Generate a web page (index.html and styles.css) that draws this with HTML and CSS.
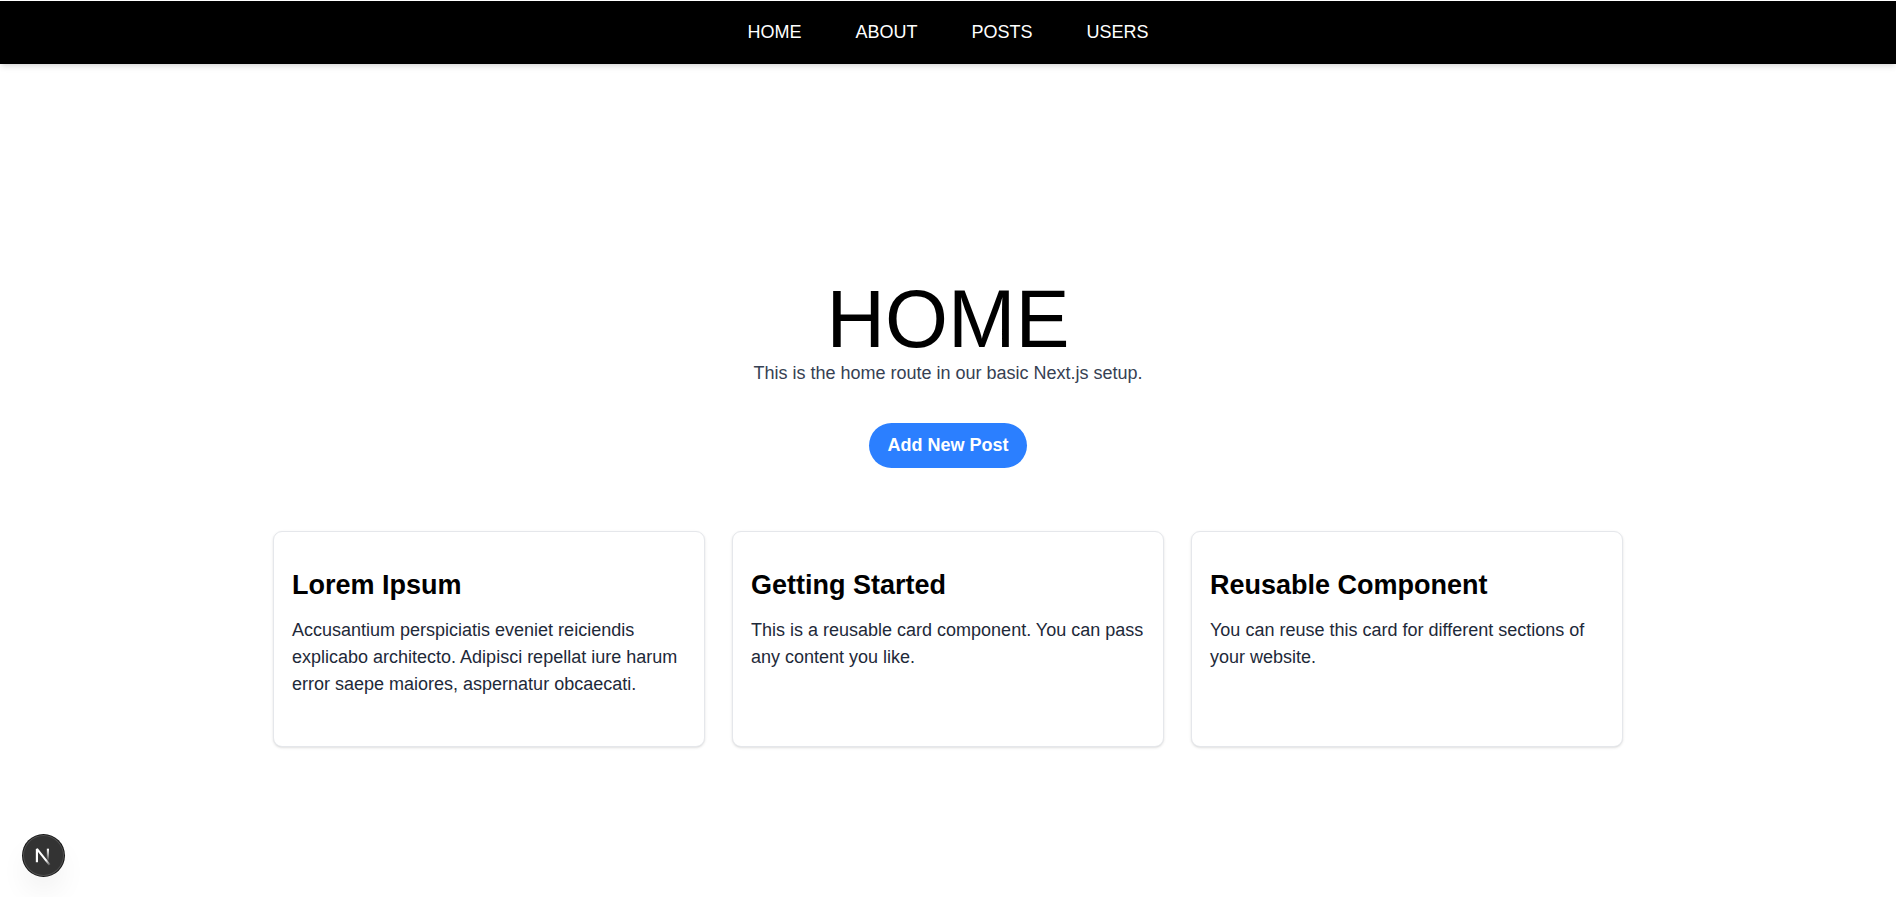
FILE: index.html
```html
<!DOCTYPE html>
<html lang="en">
<head>
<meta charset="utf-8">
<meta name="viewport" content="width=device-width, initial-scale=1">
<title>Home</title>
<link rel="stylesheet" href="styles.css">
</head>
<body>
<header class="site-header">
  <nav class="nav" aria-label="Main">
    <a class="nav-link" href="#">HOME</a>
    <a class="nav-link" href="#">ABOUT</a>
    <a class="nav-link" href="#">POSTS</a>
    <a class="nav-link" href="#">USERS</a>
  </nav>
</header>
<main class="main">
  <h1 class="title">HOME</h1>
  <p class="subtitle">This is the home route in our basic Next.js setup.</p>
  <button class="add-button" type="button">Add New Post</button>
  <section class="cards">
    <article class="card">
      <h2 class="card-title">Lorem Ipsum</h2>
      <p class="card-text">Accusantium perspiciatis eveniet reiciendis explicabo architecto. Adipisci repellat iure harum error saepe maiores, aspernatur obcaecati.</p>
    </article>
    <article class="card">
      <h2 class="card-title">Getting Started</h2>
      <p class="card-text">This is a reusable card component. You can pass any content you like.</p>
    </article>
    <article class="card">
      <h2 class="card-title">Reusable Component</h2>
      <p class="card-text">You can reuse this card for different sections of your website.</p>
    </article>
  </section>
</main>
<button class="dev-badge" type="button" aria-label="Open Next.js Dev Tools">
  <svg width="40" height="40" viewBox="0 0 40 40" fill="none" aria-hidden="true">
    <defs>
      <linearGradient id="diagonal" x1="9.96" y1="11.12" x2="14.5" y2="17" gradientUnits="userSpaceOnUse">
        <stop stop-color="#fff"/><stop offset="0.85" stop-color="#fff" stop-opacity="0"/><stop offset="1" stop-color="#fff" stop-opacity="0"/>
      </linearGradient>
      <linearGradient id="stem" x1="11.82" y1="1.4" x2="11.82" y2="12" gradientUnits="userSpaceOnUse">
        <stop stop-color="#fff"/><stop offset="1" stop-color="#fff" stop-opacity="0"/>
      </linearGradient>
    </defs>
    <g transform="translate(10.2 11.3) scale(1.16)" stroke-width="1.86" stroke-linejoin="bevel">
      <path d="M13.3 15.2 2.34 1.4v11.4" stroke="url(#diagonal)"/>
      <path d="M11.825 1.2v11.6" stroke="url(#stem)"/>
    </g>
  </svg>
</button>
</body>
</html>
```
FILE: styles.css
```css
* {
  box-sizing: border-box;
  margin: 0;
  padding: 0;
}

body {
  display: flex;
  flex-direction: column;
  min-height: 100vh;
  background: #fff;
  color: #000;
  font: 18px/27px "Liberation Sans", Arial, sans-serif;
}

.site-header {
  padding: 18px;
  border-top: 1px solid #fff;
  background: #000;
  background-clip: padding-box;
  box-shadow: 0 4px 6px -1px rgba(0, 0, 0, 0.1), 0 2px 4px -2px rgba(0, 0, 0, 0.1);
}

.nav {
  display: flex;
  justify-content: center;
  gap: 54px;
}

.nav-link {
  color: #fff;
  text-decoration: none;
}

.main {
  flex: 1;
  display: flex;
  flex-direction: column;
  align-items: center;
  justify-content: center;
  padding: 64px 18px 0;
}

.title {
  font-size: 81px;
  font-weight: 400;
  line-height: 81px;
}

.subtitle {
  color: #364153;
}

.add-button {
  margin: 36px 0 63px;
  padding: 9px 18px;
  border: 0;
  border-radius: 23px;
  background: #2b7fff;
  color: #fff;
  font: inherit;
  font-weight: 700;
  cursor: pointer;
}

.cards {
  display: grid;
  grid-template-columns: repeat(3, 1fr);
  gap: 27px;
  width: 100%;
  max-width: 1350px;
}

.card {
  min-height: 216px;
  padding: 35px 18px;
  border: 1px solid #e5e7eb;
  border-radius: 9px;
  background: #fff;
  box-shadow: 0 1px 3px rgba(0, 0, 0, 0.1), 0 1px 2px -1px rgba(0, 0, 0, 0.1);
}

.card-title {
  margin-bottom: 14px;
  font-size: 27px;
  font-weight: 700;
  line-height: 36px;
}

.card-text {
  color: #1e2939;
}

.dev-badge {
  position: fixed;
  left: 23px;
  bottom: 21px;
  display: grid;
  place-items: center;
  width: 41px;
  height: 41px;
  border: 0;
  border-radius: 50%;
  background: #333;
  box-shadow: 0 0 0 1px #171717, inset 0 0 0 1px rgba(255, 255, 255, 0.14), 0 16px 32px -8px rgba(0, 0, 0, 0.14);
  cursor: pointer;
}

@media (max-width: 900px) {
  .cards {
    grid-template-columns: 1fr;
  }
}
```
